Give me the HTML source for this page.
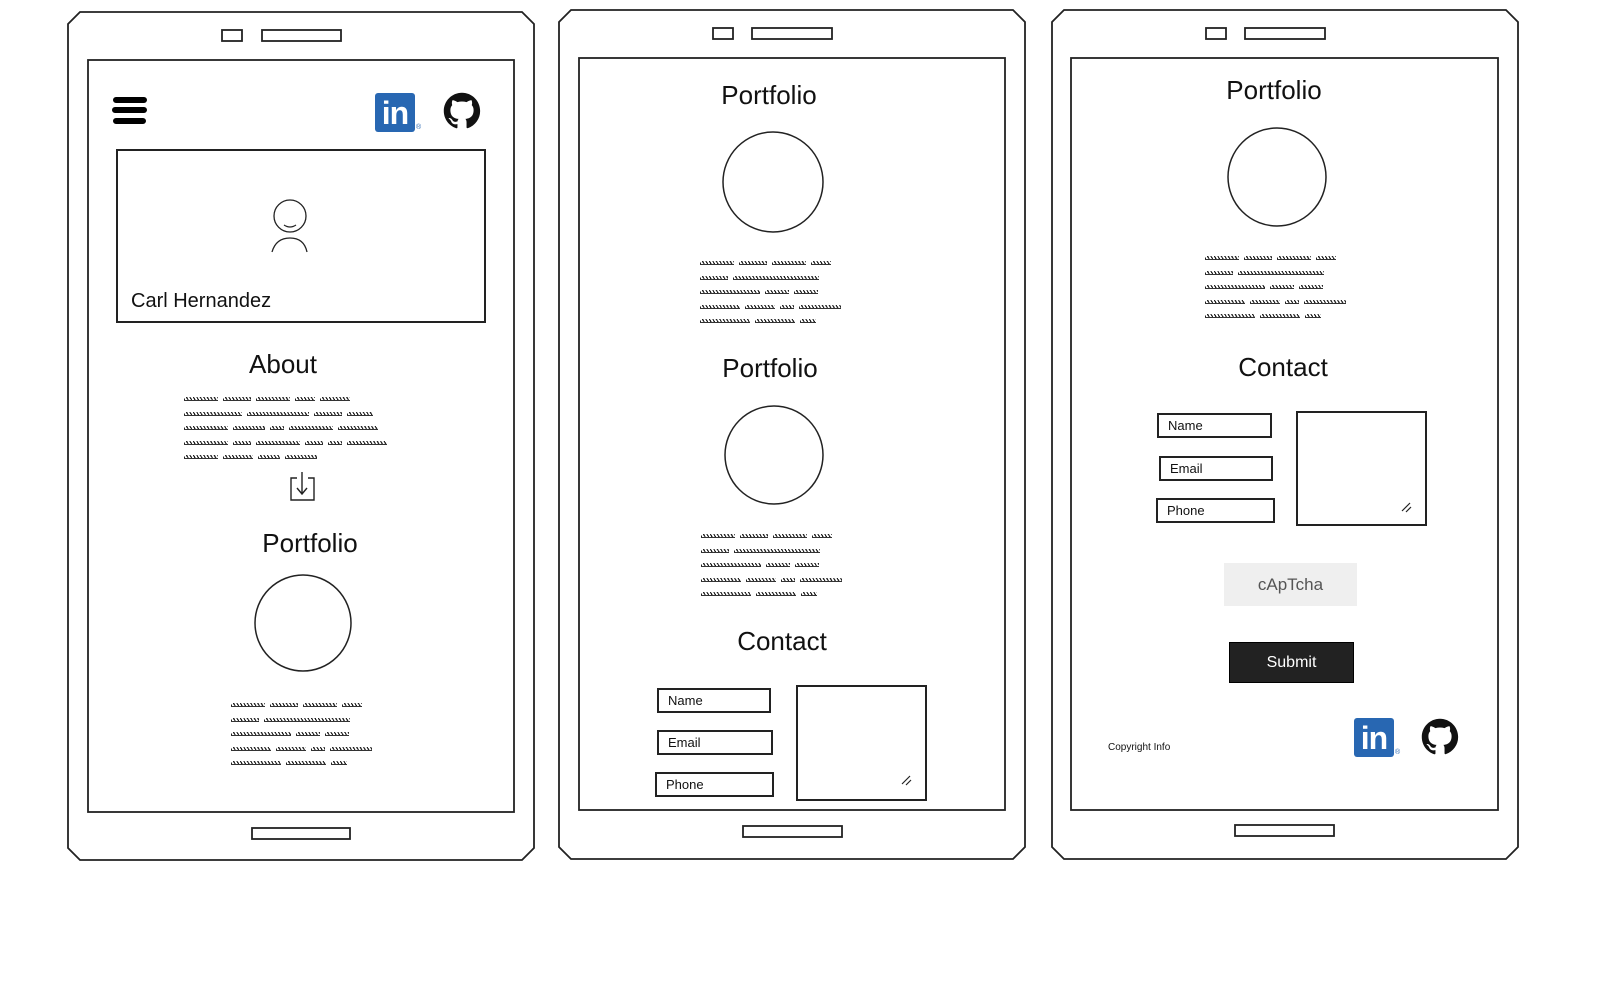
<!DOCTYPE html>
<html><head><meta charset="utf-8"><style>
body{margin:0;width:1597px;height:988px;background:#fff;position:relative;overflow:hidden;font-family:"Liberation Sans",sans-serif;color:#111}
.a{position:absolute}
.t{position:absolute;transform:translateX(-50%);font-size:26px;white-space:nowrap;line-height:1}
.sq{position:absolute;line-height:0;white-space:nowrap}
.sq div{height:4px;margin-bottom:10.5px}
.sq span{display:inline-block;height:4px;margin-right:5px;background:repeating-linear-gradient(60deg,#222 0 1.2px,transparent 1.2px 3px);border-bottom:1px solid #333;box-sizing:border-box}
.box{position:absolute;border:2px solid #222;box-sizing:border-box;font-size:13px;padding-left:9px;line-height:21px}
</style></head><body>
<svg class="a" style="left:0;top:0" width="1597" height="988" fill="none" stroke="#222" stroke-width="1.8">
<!-- phone 1 -->
<path d="M80 12H522L534 24V848L522 860H80L68 848V24Z"/>
<rect x="88" y="60" width="426" height="752"/>
<rect x="222" y="30" width="20" height="11"/><rect x="262" y="30" width="79" height="11"/>
<rect x="252" y="828" width="98" height="11"/>
<!-- phone 2 -->
<path d="M571 10H1013L1025 22V847L1013 859H571L559 847V22Z"/>
<rect x="579" y="58" width="426" height="752"/>
<rect x="713" y="28" width="20" height="11"/><rect x="752" y="28" width="80" height="11"/>
<rect x="743" y="826" width="99" height="11"/>
<!-- phone 3 -->
<path d="M1064 10H1506L1518 22V847L1506 859H1064L1052 847V22Z"/>
<rect x="1071" y="58" width="427" height="752"/>
<rect x="1206" y="28" width="20" height="11"/><rect x="1245" y="28" width="80" height="11"/>
<rect x="1235" y="825" width="99" height="11"/>
<!-- hamburger -->
<g stroke="#000" stroke-width="6" stroke-linecap="round"><path d="M116 100H144M115 110H144M116 121H143"/></g>
<!-- profile box -->
<rect x="117" y="150" width="368" height="172" stroke-width="2"/>
<circle cx="290" cy="216" r="16" stroke-width="1.3"/>
<path d="M284 225Q290 229 296 225" stroke-width="1.2"/>
<path d="M272 252Q276 238 290 238Q304 238 307 252" stroke-width="1.3"/>
<!-- download -->
<path d="M297 478H291V500H314V478H308M302 472V493M297 488L302 494L307 488" stroke-width="1.4"/>
<!-- circles -->
<circle cx="303" cy="623" r="48" stroke-width="1.5"/>
<circle cx="773" cy="182" r="50" stroke-width="1.5"/>
<circle cx="774" cy="455" r="49" stroke-width="1.5"/>
<circle cx="1277" cy="177" r="49" stroke-width="1.5"/>
<!-- textareas -->
<rect x="797" y="686" width="129" height="114" stroke-width="2"/>
<path d="M902 784L910 776M906 785L911 780" stroke-width="1.2"/>
<rect x="1297" y="412" width="129" height="113" stroke-width="2"/>
<path d="M1402 511L1410 503M1406 512L1411 507" stroke-width="1.2"/>
<!-- github icons -->
<g fill="#111" stroke="none">
<path transform="translate(443 92) scale(1.58)" d="M12 .5C5.65.5.5 5.65.5 12c0 5.08 3.29 9.39 7.86 10.91.58.1.79-.25.79-.56v-2c-3.2.7-3.87-1.54-3.87-1.54-.52-1.33-1.28-1.68-1.28-1.68-1.04-.71.08-.7.08-.7 1.15.08 1.76 1.19 1.76 1.19 1.03 1.76 2.69 1.25 3.35.96.1-.74.4-1.25.73-1.54-2.55-.29-5.24-1.28-5.24-5.68 0-1.26.45-2.28 1.18-3.09-.12-.29-.51-1.46.11-3.05 0 0 .97-.31 3.17 1.18a11 11 0 0 1 5.77 0c2.2-1.49 3.17-1.18 3.17-1.18.63 1.59.23 2.76.11 3.05.74.81 1.18 1.83 1.18 3.09 0 4.41-2.69 5.38-5.25 5.67.41.36.78 1.06.78 2.14v3.17c0 .31.21.67.8.56A11.5 11.5 0 0 0 23.5 12C23.5 5.65 18.35.5 12 .5z"/>
<path transform="translate(1421 718) scale(1.58)" d="M12 .5C5.65.5.5 5.65.5 12c0 5.08 3.29 9.39 7.86 10.91.58.1.79-.25.79-.56v-2c-3.2.7-3.870-1.54-3.87-1.54-.52-1.33-1.28-1.68-1.28-1.68-1.04-.71.08-.7.08-.7 1.15.08 1.760 1.19 1.76 1.19 1.03 1.76 2.69 1.25 3.35.96.1-.74.4-1.25.73-1.54-2.55-.29-5.24-1.28-5.24-5.68 0-1.26.45-2.28 1.18-3.09-.12-.29-.51-1.46.11-3.05 0 0 .97-.31 3.17 1.18a11 11 0 0 1 5.77 0c2.2-1.49 3.17-1.18 3.17-1.18.63 1.59.23 2.76.11 3.05.74.81 1.18 1.83 1.18 3.09 0 4.410-2.69 5.38-5.25 5.67.41.36.78 1.06.78 2.14v3.17c0 .31.21.67.8.56A11.5 11.5 0 0 0 23.5 12C23.5 5.65 18.35.5 12 .5z"/>
</g>
</svg>

<!-- linkedin -->
<div class="a" style="left:375px;top:93px;width:40px;height:39px;background:#2867b2;border-radius:3px;color:#fff;font:bold 32px/40px 'Liberation Sans',sans-serif;text-align:center;letter-spacing:-1px">in</div>
<div class="a" style="left:416px;top:124px;font-size:7px;color:#2867b2">®</div>
<div class="a" style="left:1354px;top:718px;width:40px;height:39px;background:#2867b2;border-radius:3px;color:#fff;font:bold 32px/40px 'Liberation Sans',sans-serif;text-align:center;letter-spacing:-1px">in</div>
<div class="a" style="left:1395px;top:749px;font-size:7px;color:#2867b2">®</div>

<div class="a" style="left:131px;top:290px;font-size:20px">Carl Hernandez</div>

<div class="t" style="left:283px;top:351px">About</div>
<div class="t" style="left:310px;top:530px">Portfolio</div>
<div class="t" style="left:769px;top:82px">Portfolio</div>
<div class="t" style="left:770px;top:355px">Portfolio</div>
<div class="t" style="left:782px;top:628px">Contact</div>
<div class="t" style="left:1274px;top:77px">Portfolio</div>
<div class="t" style="left:1283px;top:354px">Contact</div>

<div class="sq" style="left:184px;top:397px">
<div><span style="width:34px"></span><span style="width:28px"></span><span style="width:34px"></span><span style="width:20px"></span><span style="width:30px"></span></div>
<div><span style="width:58px"></span><span style="width:62px"></span><span style="width:28px"></span><span style="width:26px"></span></div>
<div><span style="width:44px"></span><span style="width:32px"></span><span style="width:14px"></span><span style="width:44px"></span><span style="width:40px"></span></div>
<div><span style="width:44px"></span><span style="width:18px"></span><span style="width:44px"></span><span style="width:18px"></span><span style="width:14px"></span><span style="width:40px"></span></div>
<div><span style="width:34px"></span><span style="width:30px"></span><span style="width:22px"></span><span style="width:32px"></span></div>
</div>

<div class="sq" style="left:231px;top:703px">
<div><span style="width:34px"></span><span style="width:28px"></span><span style="width:34px"></span><span style="width:20px"></span></div>
<div><span style="width:28px"></span><span style="width:86px"></span></div>
<div><span style="width:60px"></span><span style="width:24px"></span><span style="width:24px"></span></div>
<div><span style="width:40px"></span><span style="width:30px"></span><span style="width:14px"></span><span style="width:42px"></span></div>
<div><span style="width:50px"></span><span style="width:40px"></span><span style="width:16px"></span></div>
</div>
<div class="sq" style="left:700px;top:261px">
<div><span style="width:34px"></span><span style="width:28px"></span><span style="width:34px"></span><span style="width:20px"></span></div>
<div><span style="width:28px"></span><span style="width:86px"></span></div>
<div><span style="width:60px"></span><span style="width:24px"></span><span style="width:24px"></span></div>
<div><span style="width:40px"></span><span style="width:30px"></span><span style="width:14px"></span><span style="width:42px"></span></div>
<div><span style="width:50px"></span><span style="width:40px"></span><span style="width:16px"></span></div>
</div>
<div class="sq" style="left:701px;top:534px">
<div><span style="width:34px"></span><span style="width:28px"></span><span style="width:34px"></span><span style="width:20px"></span></div>
<div><span style="width:28px"></span><span style="width:86px"></span></div>
<div><span style="width:60px"></span><span style="width:24px"></span><span style="width:24px"></span></div>
<div><span style="width:40px"></span><span style="width:30px"></span><span style="width:14px"></span><span style="width:42px"></span></div>
<div><span style="width:50px"></span><span style="width:40px"></span><span style="width:16px"></span></div>
</div>
<div class="sq" style="left:1205px;top:256px">
<div><span style="width:34px"></span><span style="width:28px"></span><span style="width:34px"></span><span style="width:20px"></span></div>
<div><span style="width:28px"></span><span style="width:86px"></span></div>
<div><span style="width:60px"></span><span style="width:24px"></span><span style="width:24px"></span></div>
<div><span style="width:40px"></span><span style="width:30px"></span><span style="width:14px"></span><span style="width:42px"></span></div>
<div><span style="width:50px"></span><span style="width:40px"></span><span style="width:16px"></span></div>
</div>

<div class="box" style="left:657px;top:688px;width:114px;height:25px">Name</div>
<div class="box" style="left:657px;top:730px;width:116px;height:25px">Email</div>
<div class="box" style="left:655px;top:772px;width:119px;height:25px">Phone</div>
<div class="box" style="left:1157px;top:413px;width:115px;height:25px">Name</div>
<div class="box" style="left:1159px;top:456px;width:114px;height:25px">Email</div>
<div class="box" style="left:1156px;top:498px;width:119px;height:25px">Phone</div>

<div class="a" style="left:1224px;top:563px;width:133px;height:43px;background:#efefef;color:#555;font-size:17px;line-height:43px;text-align:center">cApTcha</div>
<div class="a" style="left:1229px;top:642px;width:125px;height:41px;background:#222;border:1.5px solid #000;box-sizing:border-box;color:#fff;font-size:16px;line-height:39px;text-align:center">Submit</div>
<div class="a" style="left:1108px;top:742px;font-size:10px">Copyright Info</div>
</body></html>
